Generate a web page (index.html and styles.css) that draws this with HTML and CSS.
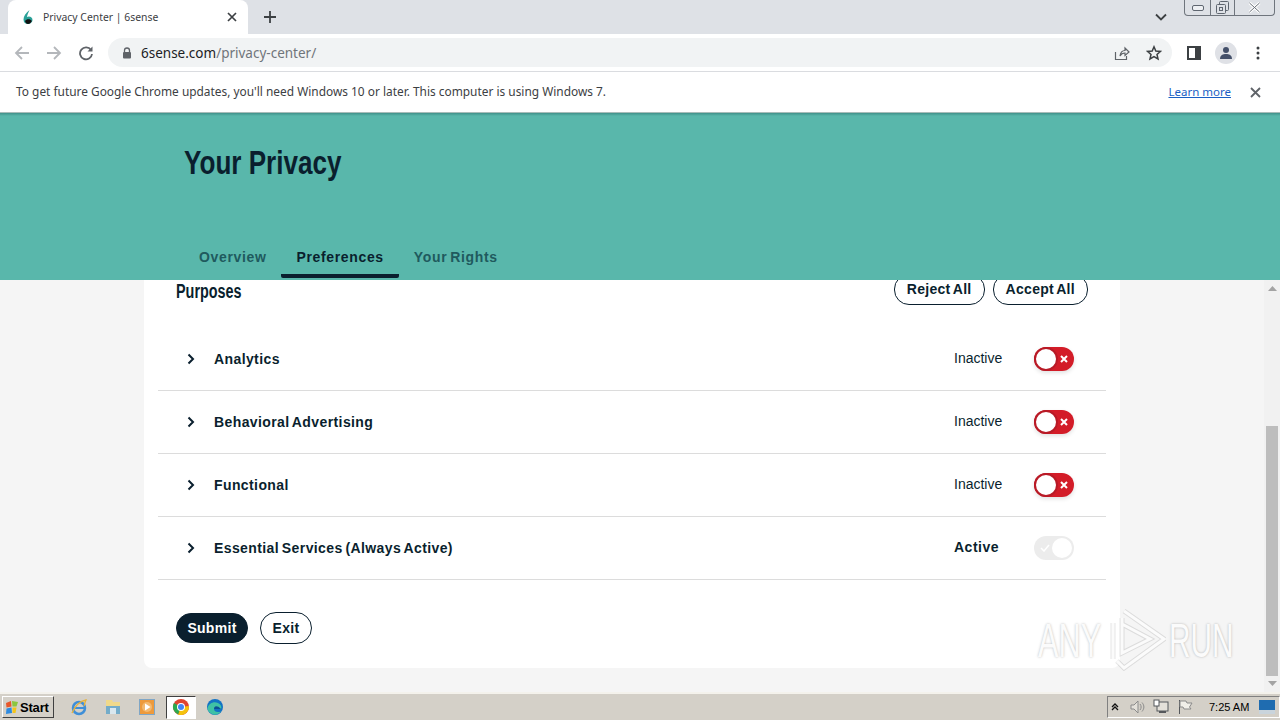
FILE: index.html
```html
<!DOCTYPE html>
<html>
<head lang="en">
    <meta charset="UTF-8">
    <title>Privacy Center | 6sense</title>
    <link rel="stylesheet" href="styles.css">
</head>
<body>
<div class="browser">
    <div class="tabstrip">
        <div class="tab">
            <svg class="favicon" width="16" height="16" viewBox="0 0 16 16"><path d="M9.5 1 C6 4 3.5 7 3.5 10.5 C3.5 13.5 5.5 15 8 15 C10.5 15 12.5 13.3 12.5 11 C12.5 9 11 7.5 8.8 7.5 C8 7.5 7.4 7.7 7 8 C7.3 5.5 8.5 3.5 9.5 1Z" fill="#2aa198"/><path d="M5 12 C6.5 9.5 10.5 9.5 11.8 12 C11 14 9.5 15 8 15 C6.5 15 5.5 13.8 5 12Z" fill="#111"/></svg>
            <span class="tab-title">Privacy Center | 6sense</span>
            <svg class="tab-close" width="10" height="10" viewBox="0 0 10 10"><path d="M1 1 L9 9 M9 1 L1 9" stroke="#3c4043" stroke-width="1.7"/></svg>
        </div>
        <svg class="new-tab" width="14" height="14" viewBox="0 0 14 14"><path d="M7 1 V13 M1 7 H13" stroke="#3c4043" stroke-width="1.8"/></svg>
        <svg class="tab-menu" width="12" height="8" viewBox="0 0 12 8"><path d="M1 1.5 L6 6.5 L11 1.5" fill="none" stroke="#3c4043" stroke-width="1.8"/></svg>
        <div class="win-btns">
            <div class="win-btn win-min"><svg width="12" height="6" viewBox="0 0 12 6"><rect x="0.5" y="0.5" width="11" height="5" rx="1.5" fill="#eef0f3" stroke="#5f6670"/></svg></div>
            <div class="win-btn win-max"><svg width="13" height="13" viewBox="0 0 13 13"><rect x="3.5" y="0.5" width="9" height="9" rx="1" fill="none" stroke="#5f6670"/><rect x="0.5" y="3.5" width="9" height="9" rx="1" fill="#dee1e6" stroke="#5f6670"/><rect x="3.5" y="6.5" width="3" height="3" fill="none" stroke="#5f6670"/></svg></div>
            <div class="win-btn win-close"><svg width="13" height="11" viewBox="0 0 13 11"><path d="M1.5 1 L11.5 10 M11.5 1 L1.5 10" stroke="#fff" stroke-width="3"/><path d="M1.5 1 L11.5 10 M11.5 1 L1.5 10" stroke="#6a7078" stroke-width="1" fill="none"/></svg></div>
        </div>
    </div>
    <div class="toolbar">
        <svg class="tool" width="16" height="16" viewBox="0 0 16 16"><path d="M15 8 H2 M8 2 L2 8 L8 14" fill="none" stroke="#b4b7bb" stroke-width="1.8"/></svg>
        <svg class="tool" width="16" height="16" viewBox="0 0 16 16"><path d="M1 8 H14 M8 2 L14 8 L8 14" fill="none" stroke="#b4b7bb" stroke-width="1.8"/></svg>
        <svg class="tool" width="16" height="16" viewBox="0 0 16 16"><path d="M13 5 A6 6 0 1 0 14 9" fill="none" stroke="#5f6368" stroke-width="1.8"/><path d="M14.5 1.5 V6.5 H9.5Z" fill="#5f6368"/></svg>
        <div class="omnibox">
            <svg class="lock" width="10" height="12" viewBox="0 0 10 12"><path d="M2.5 5 V3.5 A2.5 2.5 0 0 1 7.500 3.5 V5" fill="none" stroke="#5f6368" stroke-width="1.3"/><rect x="1" y="5" width="8" height="6.500" rx="1" fill="#5f6368"/></svg>
            <span class="url"><span class="url-host">6sense.com</span>/privacy-center/</span>
            <svg class="omni-icon" width="16" height="16" viewBox="0 0 16 16"><path d="M1.500 7 V14.500 H12.500 V11 M6 11 C6.500 7 9 5.500 11 5.500 V3 L15 7 L11 10.500 V8 C9 8 7 9 6 11Z" fill="none" stroke="#5f6368" stroke-width="1.200"/></svg>
            <svg class="omni-icon" width="16" height="16" viewBox="0 0 16 16"><path d="M8 1.800 L9.800 6 L14.400 6.400 L11 9.400 L12 13.900 L8 11.500 L4 13.900 L5 9.400 L1.600 6.400 L6.200 6Z" fill="none" stroke="#3c4043" stroke-width="1.500"/></svg>
        </div>
        <svg class="side-panel" width="14" height="14" viewBox="0 0 14 14"><rect x="1" y="1" width="12" height="12" fill="#fff" stroke="#3c4043" stroke-width="2"/><rect x="8" y="1" width="5" height="12" fill="#3c4043"/></svg>
        <div class="avatar"><svg width="14" height="14" viewBox="0 0 14 14"><circle cx="7" cy="4" r="3" fill="#44506a"/><path d="M1 13 C1 9 4 8 7 8 C10 8 13 9 13 13Z" fill="#44506a"/></svg></div>
        <svg class="dots" width="4" height="14" viewBox="0 0 4 14"><circle cx="2" cy="2" r="1.500" fill="#3c4043"/><circle cx="2" cy="7" r="1.500" fill="#3c4043"/><circle cx="2" cy="12" r="1.500" fill="#3c4043"/></svg>
    </div>
    <div class="infobar">
        <span class="info-text">To get future Google Chrome updates, you'll need Windows 10 or later. This computer is using Windows 7.</span>
        <a class="info-link">Learn more</a>
        <svg class="info-close" width="11" height="11" viewBox="0 0 11 11"><path d="M1 1 L10 10 M10 1 L1 10" stroke="#5f6368" stroke-width="1.800"/></svg>
    </div>
</div>

<div class="page">
    <header class="hero">
        <h1 class="hero-title">Your Privacy</h1>
        <nav class="tabs">
            <a class="tabs-item">Overview</a>
            <a class="tabs-item tabs-item-on">Preferences</a>
            <a class="tabs-item">Your Rights</a>
        </nav>
    </header>
    <div class="content">
        <main class="scroller">
            <section class="card">
                <div class="card-head">
                    <h2 class="card-title">Purposes</h2>
                    <div class="card-actions">
                        <button class="btn">Reject All</button>
                        <button class="btn">Accept All</button>
                    </div>
                </div>
                <div class="row">
                    <svg class="chev" width="8" height="12" viewBox="0 0 8 12"><path d="M1.500 1.500 L6 6 L1.500 10.500" fill="none" stroke="#0a1f2e" stroke-width="2"/></svg>
                    <span class="row-name">Analytics</span>
                    <span class="row-state">Inactive</span>
                    <span class="toggle toggle-off"><span class="knob"></span><svg width="8" height="8" viewBox="0 0 8 8"><path d="M1 1 L7 7 M7 1 L1 7" stroke="#fff" stroke-width="2"/></svg></span>
                </div>
                <div class="row">
                    <svg class="chev" width="8" height="12" viewBox="0 0 8 12"><path d="M1.500 1.500 L6 6 L1.500 10.500" fill="none" stroke="#0a1f2e" stroke-width="2"/></svg>
                    <span class="row-name">Behavioral Advertising</span>
                    <span class="row-state">Inactive</span>
                    <span class="toggle toggle-off"><span class="knob"></span><svg width="8" height="8" viewBox="0 0 8 8"><path d="M1 1 L7 7 M7 1 L1 7" stroke="#fff" stroke-width="2"/></svg></span>
                </div>
                <div class="row">
                    <svg class="chev" width="8" height="12" viewBox="0 0 8 12"><path d="M1.500 1.500 L6 6 L1.500 10.500" fill="none" stroke="#0a1f2e" stroke-width="2"/></svg>
                    <span class="row-name">Functional</span>
                    <span class="row-state">Inactive</span>
                    <span class="toggle toggle-off"><span class="knob"></span><svg width="8" height="8" viewBox="0 0 8 8"><path d="M1 1 L7 7 M7 1 L1 7" stroke="#fff" stroke-width="2"/></svg></span>
                </div>
                <div class="row">
                    <svg class="chev" width="8" height="12" viewBox="0 0 8 12"><path d="M1.500 1.500 L6 6 L1.500 10.500" fill="none" stroke="#0a1f2e" stroke-width="2"/></svg>
                    <span class="row-name">Essential Services (Always Active)</span>
                    <span class="row-state row-state-on">Active</span>
                    <span class="toggle toggle-on"><svg width="10" height="8" viewBox="0 0 10 8"><path d="M1 4 L4 7 L9 1" fill="none" stroke="#fff" stroke-width="1.500"/></svg><span class="knob"></span></span>
                </div>
                <div class="card-foot">
                    <button class="btn btn-dark">Submit</button>
                    <button class="btn btn-exit">Exit</button>
                </div>
            </section>
        </main>
        <div class="scrollbar">
            <svg width="9" height="5" viewBox="0 0 9 5"><path d="M4.500 0 L9 5 H0Z" fill="#a3a3a3"/></svg>
            <div class="scroll-track"><div class="scroll-thumb"></div></div>
            <svg width="9" height="5" viewBox="0 0 9 5"><path d="M0 0 H9 L4.500 5Z" fill="#a3a3a3"/></svg>
        </div>
    </div>
</div>

<div class="taskbar">
    <button class="start">
        <svg width="16" height="15" viewBox="0 0 16 15"><path d="M2 3 L7 1 L7.500 6.500 L2.500 7.500Z" fill="#e8572a"/><path d="M8 1 L14 2 L12.500 6.500 L8.500 6.500Z" fill="#8cc63f"/><path d="M2.500 8.500 L7.500 7.500 L8 13 L2 14Z" fill="#2d8ae0"/><path d="M8.500 7.500 L12.500 7.500 L11.500 13 L8.500 13Z" fill="#f5c518"/></svg>
        <span>Start</span>
    </button>
    <div class="quick">
        <svg class="quick-icon" width="18" height="18" viewBox="0 0 18 18"><circle cx="9" cy="10" r="6" fill="none" stroke="#3f8fd8" stroke-width="2.500"/><path d="M4 10 H14" stroke="#3f8fd8" stroke-width="2"/><path d="M2 15 C5 8 10 3 16 2 C14 6 15 6 14 8" fill="none" stroke="#e8b23a" stroke-width="1.300"/></svg>
        <svg class="quick-icon" width="18" height="18" viewBox="0 0 18 18"><path d="M2 2 H8 L9 4 H16 V16 H2Z" fill="#f0d98a"/><rect x="2" y="8" width="14" height="8" fill="#74acc9"/><rect x="6" y="10" width="6" height="6" fill="#d9e7ee"/></svg>
        <svg class="quick-icon" width="18" height="18" viewBox="0 0 18 18"><rect x="1.500" y="1.500" width="15" height="15" fill="#ed9a3c" stroke="#7fa6c6"/><circle cx="9" cy="9" r="5" fill="#f3b970"/><path d="M7 5.500 L12.500 9 L7 12.500Z" fill="#fff"/></svg>
        <div class="quick-on"><svg width="18" height="18" viewBox="0 0 18 18"><circle cx="9" cy="9" r="8" fill="#e0442f"/><path d="M9 9 L16.900 8 A8 8 0 0 1 6 16.400Z" fill="#f4c20d"/><path d="M9 9 L6 16.400 A8 8 0 0 1 2 5Z" fill="#2da94f"/><circle cx="9" cy="9" r="4" fill="#fff"/><circle cx="9" cy="9" r="3" fill="#4285f4"/></svg></div>
        <svg class="quick-icon" width="18" height="18" viewBox="0 0 18 18"><circle cx="9" cy="9" r="8" fill="#1273c4"/><path d="M1.500 10 C3 5 8 3 12 5 C15 6.500 16 9 15 11 L8 11 C8 13.500 11 15 15 13.500 C13 16.500 9 17.500 6 16 C3 14.500 1.500 12.500 1.500 10Z" fill="#3fc1a5"/><path d="M8 11 C8 8 11 7 15 11Z" fill="#0b4f94"/></svg>
    </div>
    <div class="tray">
        <svg class="tray-up" width="8" height="8" viewBox="0 0 8 8"><path d="M1 4 L4 1 L7 4 M1 7 L4 4 L7 7" fill="none" stroke="#111" stroke-width="1.300"/></svg>
        <svg width="16" height="16" viewBox="0 0 16 16"><path d="M2 6 H5 L9 2 V14 L5 10 H2Z" fill="#e4e1da" stroke="#8b8b8b"/><path d="M11 5 C12.500 7 12.500 9 11 11 M13 3.500 C15.500 6.500 15.500 9.500 13 12.500" fill="none" stroke="#8b8b8b"/></svg>
        <svg width="16" height="16" viewBox="0 0 16 16"><rect x="4" y="3" width="11" height="9" fill="#e4e1da" stroke="#55585c"/><rect x="1" y="1" width="5" height="6" fill="#fff" stroke="#55585c"/><rect x="6" y="12" width="7" height="2" fill="#55585c"/></svg>
        <svg width="16" height="16" viewBox="0 0 16 16"><path d="M2.500 1 V15" stroke="#55585c"/><path d="M3 2 H9 L10 4 H15 L12.500 8 L14 10 H7 L6 8 H3Z" fill="#f1efe9" stroke="#8b8b8b"/></svg>
        <span class="clock">7:25 AM</span>
        <svg width="16" height="14" viewBox="0 0 16 14"><rect width="16" height="14" fill="#1f6cb0"/><rect y="10" width="16" height="4" fill="#c9d4dc"/></svg>
    </div>
</div>

<div class="watermark">
    <span class="wm-word wm-any">ANY</span>
    <svg class="wm-mark" width="56" height="62" viewBox="0 0 56 62"><g fill="none"><path d="M3 14 V50 M12 9 V44 L40 30 L12 15 M14 2 L54 30 L14 59 L7 52" stroke="rgba(0,0,0,.1)" stroke-width="5"/><path d="M3 14 V50 M12 9 V44 L40 30 L12 15 M14 2 L54 30 L14 59 L7 52" stroke="#fbfbfb" stroke-width="3"/></g></svg>
    <span class="wm-word">RUN</span>
</div>
</body>
</html>
```
FILE: styles.css
```css
* {
    margin: 0;
    padding: 0;
    box-sizing: border-box;
}

html, body {
    width: 1280px;
    height: 720px;
    overflow: hidden;
    background: #f5f5f5;
    font-family: "Liberation Sans", Arial, sans-serif;
    color: #0a1f2e;
}

body {
    display: flex;
    flex-direction: column;
    position: relative;
}

/* browser frame */
.tabstrip {
    height: 34px;
    background: #dee1e6;
    display: flex;
    align-items: center;
    padding-left: 8px;
}

.tab {
    width: 240px;
    height: 34px;
    background: #fff;
    border-radius: 8px 8px 0 0;
    display: flex;
    align-items: center;
    padding: 0 11px 0 12px;
}

.favicon {
    margin-right: 7px;
}

.tab-title {
    flex: 1;
    font: 10.4px "Noto Sans", sans-serif;
    color: #3c4043;
    margin-top: -1px;
}

.new-tab {
    margin-left: 15px;
}

.tab-menu {
    margin-left: 878px;
}

.win-btns {
    display: flex;
    align-self: flex-start;
    margin-left: 17px;
    height: 16px;
    width: 91px;
    border: 1px solid #6f757d;
    border-top: 0;
    border-radius: 0 0 4px 4px;
}

.win-btn {
    display: flex;
    align-items: center;
    justify-content: center;
}

.win-min {
    width: 25px;
}

.win-max {
    width: 25px;
    border-left: 1px solid #6f757d;
    border-right: 1px solid #6f757d;
}

.win-close {
    flex: 1;
}

.toolbar {
    height: 37px;
    background: #fff;
    display: flex;
    align-items: center;
    padding-left: 14px;
}

.tool {
    margin-right: 16px;
}

.omnibox {
    width: 1064px;
    height: 29px;
    margin-left: -2px;
    background: #f1f3f4;
    border-radius: 15px;
    display: flex;
    align-items: center;
    padding: 0 10px 0 14px;
}

.lock {
    margin-right: 9px;
}

.url {
    flex: 1;
    font: 13.5px "Noto Sans", sans-serif;
    color: #70757a;
}

.url-host {
    color: #202124;
}

.omni-icon {
    margin-left: 16px;
}

.side-panel {
    margin-left: 15px;
}

.avatar {
    width: 22px;
    height: 22px;
    margin-left: 14px;
    border-radius: 50%;
    background: #dfe1e6;
    display: flex;
    align-items: center;
    justify-content: center;
}

.dots {
    margin-left: 19px;
}

.infobar {
    height: 42px;
    background: #fff;
    border-top: 1px solid #dadce0;
    border-bottom: 1px solid #a9bcb9;
    display: flex;
    align-items: center;
    padding: 0 19px 0 16px;
}

.info-text {
    flex: 1;
    font: 11.9px "Noto Sans", sans-serif;
    color: #3c4043;
    margin-top: -2px;
}

.info-link {
    font: 11.5px "Noto Sans", sans-serif;
    color: #1a5fc4;
    text-decoration: underline;
    margin-right: 19px;
    margin-top: -2px;
}

/* page */
.page {
    height: 579px;
    display: flex;
    flex-direction: column;
}

.hero {
    height: 167px;
    background: linear-gradient(#40918a, #59b7ab 3px);
    padding: 32px 0 0 184px;
    display: flex;
    flex-direction: column;
    justify-content: space-between;
}

.hero-title {
    font: bold 33px "Liberation Sans", sans-serif;
    color: #0a1f2e;
    line-height: 36px;
    transform: scaleX(.79);
    transform-origin: left;
}

.tabs {
    display: flex;
    margin-bottom: 2px;
}

.tabs-item {
    padding: 1px 15px 0;
    height: 30px;
    font-weight: bold;
    font-size: 14px;
    letter-spacing: .65px;
    word-spacing: -1.5px;
    color: #1f5a5e;
    border-bottom: 4px solid transparent;
    line-height: 16px;
}

.tabs-item-on {
    color: #0a1f2e;
    border-bottom-color: #0a1f2e;
    border-radius: 2px;
}

.content {
    flex: 1;
    display: flex;
    min-height: 0;
}

.scroller {
    flex: 1;
    overflow: hidden;
    padding-left: 144px;
}

.card {
    width: 976px;
    height: 393px;
    background: #fff;
    border-radius: 0 0 8px 8px;
    padding: 0 14px;
}

.card-head {
    display: flex;
    justify-content: space-between;
    align-items: flex-start;
    padding: 0 18px;
    margin-top: -5px;
    height: 53px;
}

.card-title {
    font: bold 20px "Liberation Sans", sans-serif;
    line-height: 30px;
    margin-top: 1px;
    transform: scaleX(.72);
    transform-origin: left;
}

.card-actions {
    display: flex;
    gap: 8px;
    margin-top: -1px;
}

.btn {
    height: 30px;
    padding: 0 12px;
    border: 1px solid #0a1f2e;
    border-radius: 15px;
    background: #fff;
    color: #0a1f2e;
    font: bold 14px "Liberation Sans", sans-serif;
    letter-spacing: .3px;
    word-spacing: -1.5px;
}

.card-actions .btn {
    height: 31px;
    padding-bottom: 1px;
}

.btn-dark {
    background: #0a1f2e;
    color: #fff;
}

.row {
    height: 63px;
    display: flex;
    align-items: center;
    border-bottom: 1px solid #dcdcdc;
    padding-left: 29px;
}

.chev {
    margin-right: 19px;
}

.row-name {
    flex: 1;
    font-weight: bold;
    font-size: 14px;
    letter-spacing: .4px;
    word-spacing: -1.5px;
}

.row-state {
    width: 80px;
    font-size: 14px;
    margin-top: -2px;
}

.row-state-on {
    font-weight: bold;
    letter-spacing: .5px;
}

.toggle {
    width: 40px;
    height: 24px;
    border-radius: 12px;
    margin-right: 32px;
    display: flex;
    align-items: center;
    justify-content: space-between;
}

.toggle-off {
    background: #d31c28;
    padding-right: 6px;
    box-shadow: 0 2px 4px rgba(0, 0, 0, .12);
}

.toggle-off .knob {
    width: 24px;
    height: 24px;
    border-radius: 50%;
    background: #fff;
    border: 2px solid #b81a26;
}

.toggle-on {
    background: #ececec;
    padding: 0 2px 0 6px;
}

.toggle-on .knob {
    width: 20px;
    height: 20px;
    border-radius: 50%;
    background: #fff;
}

.card-foot {
    display: flex;
    gap: 12px;
    align-items: center;
    padding: 32px 18px 0;
}

.btn-dark,
.btn-exit {
    padding: 0;
}

.btn-dark {
    width: 72px;
}

.btn-exit {
    width: 52px;
    height: 32px;
    border-radius: 16px;
}

/* scrollbar */
.scrollbar {
    width: 16px;
    background: #f1f1f1;
    display: flex;
    flex-direction: column;
    align-items: center;
    padding: 6px 0;
}

.scroll-track {
    flex: 1;
    width: 100%;
    padding: 135px 2px 1px;
}

.scroll-thumb {
    height: 250px;
    background: #bdbdbd;
}

/* taskbar */
.taskbar {
    height: 28px;
    background: #d4d0c8;
    border-top: 2px solid #f4f2ec;
    display: flex;
    align-items: center;
    padding-left: 2px;
}

.start {
    width: 52px;
    height: 22px;
    background: #d4d0c8;
    border: 1px solid;
    border-color: #fff #404040 #404040 #fff;
    display: flex;
    align-items: center;
    gap: 0;
    padding-left: 1px;
    font: bold 13px "Liberation Sans", sans-serif;
    letter-spacing: -.2px;
    color: #000;
}

.quick {
    display: flex;
    align-items: center;
    margin-left: 16px;
    gap: 16px;
    flex: 1;
}

.quick-on {
    width: 30px;
    height: 23px;
    background: #fff;
    border: 1px solid;
    border-color: #404040 #fff #fff #404040;
    display: flex;
    align-items: center;
    justify-content: center;
    margin: 0 -6px;
}

.tray {
    width: 173px;
    height: 22px;
    border: 1px solid;
    border-color: #808080 #fff #fff #808080;
    display: flex;
    align-items: center;
    padding-left: 3px;
    gap: 8px;
}

.tray-up {
    margin-right: 2px;
}

.clock {
    font-size: 11px;
    color: #000;
    white-space: nowrap;
    margin: 0 2px 0 8px;
}

/* sits on top of everything, bottom right */
.watermark {
    position: absolute;
    left: 1038px;
    top: 609px;
    display: flex;
    align-items: center;
    font: 48px "Liberation Sans", sans-serif;
    color: #fbfbfb;
    text-shadow: 0 0 3px rgba(0, 0, 0, .28);
}

.wm-word {
    width: 65px;
    transform: scaleX(.62);
    transform-origin: left;
}

.wm-any {
    transform: scaleX(.64);
}

.wm-mark {
    margin: 0 3px 0 7px;
}
```
